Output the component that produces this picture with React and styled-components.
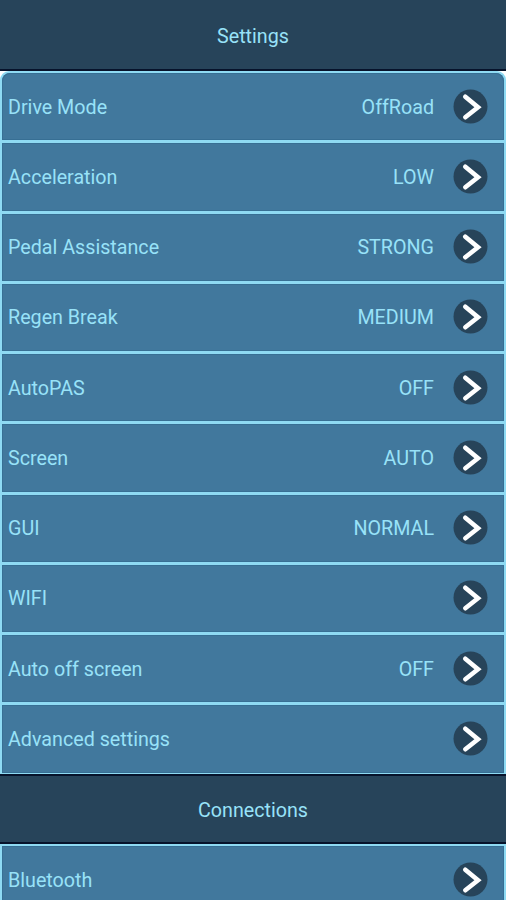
import React from 'react';
import styled, { createGlobalStyle } from 'styled-components';

// ===== Data =====
const SETTINGS = [
  { label: 'Drive Mode', value: 'OffRoad' },
  { label: 'Acceleration', value: 'LOW' },
  { label: 'Pedal Assistance', value: 'STRONG' },
  { label: 'Regen Break', value: 'MEDIUM' },
  { label: 'AutoPAS', value: 'OFF' },
  { label: 'Screen', value: 'AUTO' },
  { label: 'GUI', value: 'NORMAL' },
  { label: 'WIFI' },
  { label: 'Auto off screen', value: 'OFF' },
  { label: 'Advanced settings' },
];

const CONNECTIONS = [{ label: 'Bluetooth' }];

// ===== Styled Components =====
const GlobalStyle = createGlobalStyle`
  * {
    box-sizing: border-box;
  }

  body {
    margin: 0;
    background: #ffffff;
    font-family: Roboto, 'Liberation Sans', sans-serif;
  }
`;

const Screen = styled.main`
  height: 900px;
  overflow: hidden;
  display: flex;
  flex-direction: column;
`;

const SectionHeader = styled.header`
  flex: none;
  height: ${props => (props.$first ? '71px' : '70px')};
  display: flex;
  align-items: center;
  justify-content: center;
  background: #27445a;
  border-top: ${props => (props.$first ? '0' : '2px solid #07132b')};
  border-bottom: 2px solid #07132b;
`;

const SectionTitle = styled.h1`
  margin: 0;
  padding-top: ${props => (props.$first ? '5px' : '3px')};
  font-size: 19.7px;
  line-height: 24px;
  font-weight: 400;
  color: #98e2f8;
`;

const List = styled.ul`
  flex: none;
  margin: 0;
  padding: 2px;
  list-style: none;
  display: grid;
  grid-auto-rows: 67.25px;
  gap: 3px;
  background: #8edaf3;
  border-radius: ${props => (props.$rounded ? '9px 9px 0 0' : '0')};

  &:first-of-type {
    padding-bottom: 1.5px;
  }
`;

const Row = styled.li`
  display: flex;
  align-items: center;
  padding: 0 16px 0 6px;
  background: #41789d;
  box-shadow: inset 0 0 0 1px #376f94;

  &:first-child {
    border-radius: ${props => (props.$rounded ? '8px 8px 0 0' : '0')};
  }
`;

const Text = styled.span`
  padding-top: 2px;
  font-size: 19.7px;
  line-height: 24px;
  color: #98e2f8;
`;

const Label = styled(Text)`
  flex: 1;
`;

const Value = styled(Text)`
  margin-right: 19px;
`;

const Icon = styled.svg`
  flex: none;
  width: 35px;
  height: 35px;
  margin-bottom: 1px;
`;

// ===== Components =====
function ChevronIcon() {
  return (
    <Icon viewBox="0 0 35 35" aria-hidden="true">
      <circle cx="17.5" cy="17.5" r="17" fill="#27445a" />
      <path
        d="M12.3 7.7 25 18.2 12.3 28.2"
        fill="none"
        stroke="#ffffff"
        strokeWidth="4.6"
        strokeLinecap="round"
        strokeLinejoin="miter"
      />
    </Icon>
  );
}

function SettingsList({ items, rounded }) {
  return (
    <List $rounded={rounded}>
      {items.map((item) => (
        <Row key={item.label} $rounded={rounded}>
          <Label>{item.label}</Label>
          {item.value && <Value>{item.value}</Value>}
          <ChevronIcon />
        </Row>
      ))}
    </List>
  );
}

export default function App() {
  return (
    <>
      <GlobalStyle />
      <Screen>
        <SectionHeader $first>
          <SectionTitle $first>Settings</SectionTitle>
        </SectionHeader>
        <SettingsList items={SETTINGS} rounded />
        <SectionHeader>
          <SectionTitle>Connections</SectionTitle>
        </SectionHeader>
        <SettingsList items={CONNECTIONS} />
      </Screen>
    </>
  );
}
